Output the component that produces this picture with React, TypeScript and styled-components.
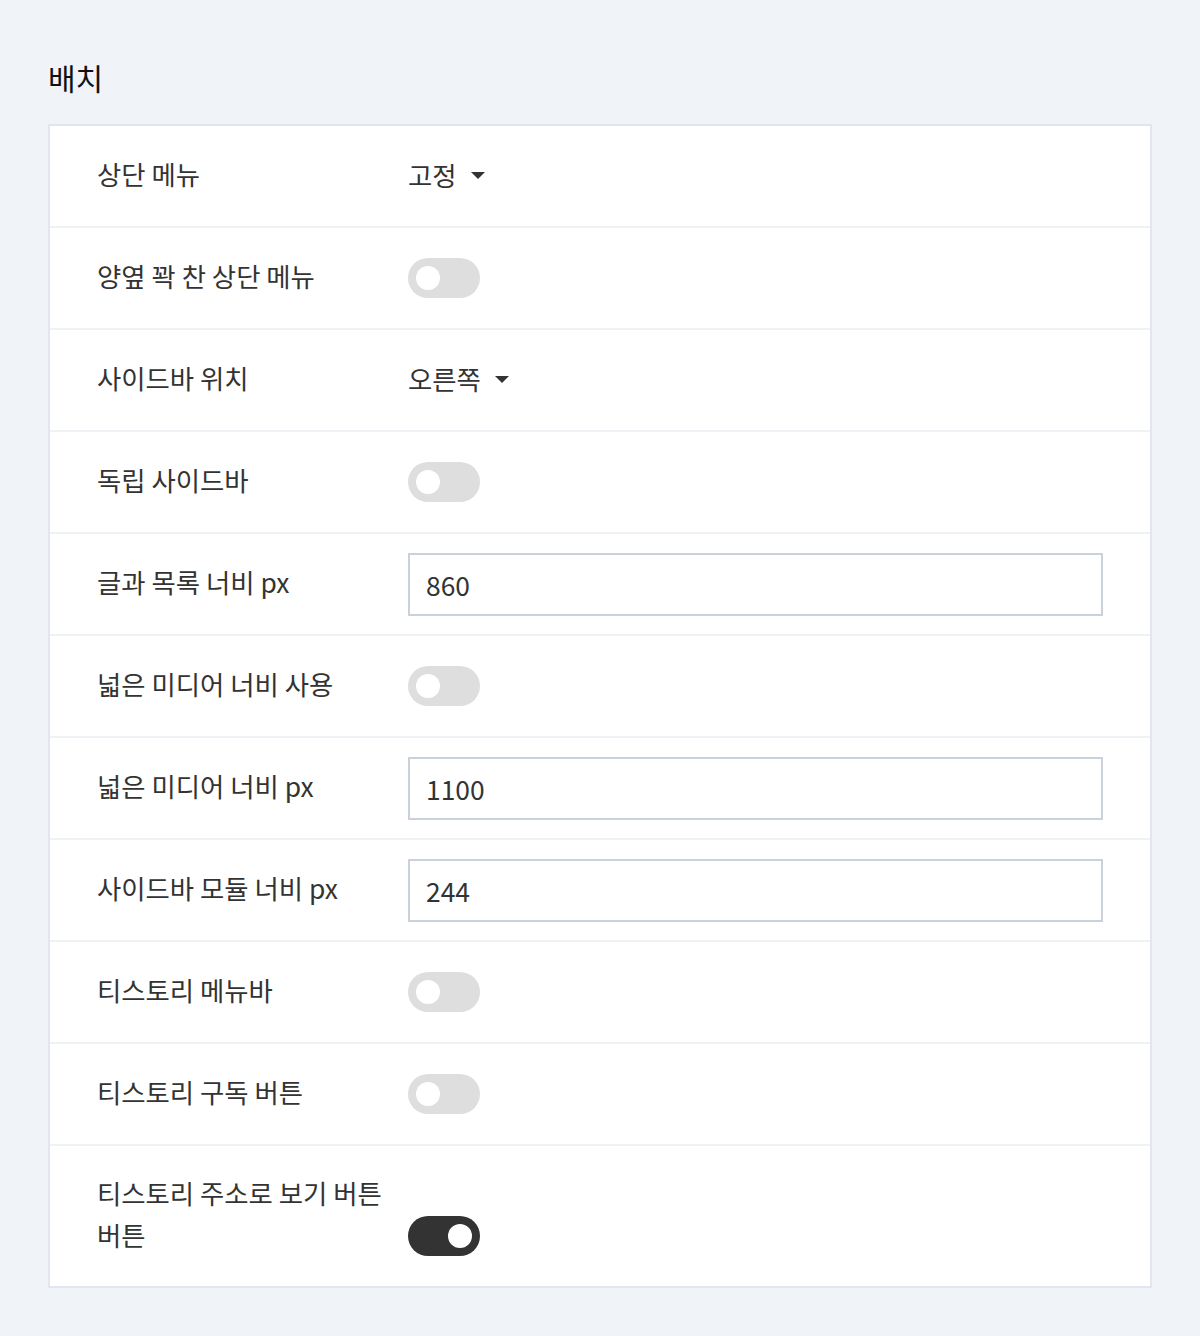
import React from "react";
import styled, { createGlobalStyle } from "styled-components";

const GlobalStyle = createGlobalStyle`
  html, body { margin: 0; padding: 0; background: #f0f3f7; }
  body { font-family: "Noto Sans CJK KR", "Noto Sans", sans-serif; color: #333; }
  * { box-sizing: border-box; }
`;

const Page = styled.div`
  padding: 55px 48px 49px;
  background: #f0f3f7;
`;

const Title = styled.h2`
  margin: 0 0 24px;
  font-size: 30px;
  font-weight: 400;
  line-height: 45px;
  color: #111;
`;

const Card = styled.div`
  background: #fff;
  border: 2px solid #e2e6ee;
`;

const Row = styled.div<{ $end?: boolean }>`
  display: flex;
  align-items: ${(p) => (p.$end ? "flex-end" : "center")};
  min-height: 102px;
  padding: 0 47px;
  border-bottom: 2px solid #eef1f5;
  &:last-child { border-bottom: none; min-height: 100px; }
`;

const Label = styled.div`
  flex: 0 0 311px;
  padding: 26px 0 30px;
  font-size: 26.4px;
  line-height: 42px;
  color: #333;
  word-break: keep-all;
`;

const Value = styled.div<{ $end?: boolean }>`
  flex: 1;
  display: flex;
  align-items: center;
  padding-bottom: ${(p) => (p.$end ? "30px" : "0")};
`;

const Select = styled.div`
  display: inline-flex;
  align-items: center;
  gap: 14px;
  font-size: 26.4px;
  line-height: 42px;
  color: #333;
  cursor: pointer;
  margin-top: -3px;
`;

const Caret = styled.span`
  width: 0;
  height: 0;
  border-left: 7px solid transparent;
  border-right: 7px solid transparent;
  border-top: 7px solid #333;
  margin-top: 2px;
`;

const Toggle = styled.div<{ $on?: boolean }>`
  position: relative;
  width: 72px;
  height: 40px;
  border-radius: 20px;
  background: ${(p) => (p.$on ? "#333333" : "#dedede")};
  &::after {
    content: "";
    position: absolute;
    top: 8px;
    left: ${(p) => (p.$on ? "40px" : "8px")};
    width: 24px;
    height: 24px;
    border-radius: 50%;
    background: #fff;
  }
`;

const Input = styled.input`
  width: 695px;
  height: 63px;
  border: 2px solid #c9d1db;
  padding: 0 16px;
  font-family: "Noto Sans CJK KR", "Noto Sans", sans-serif;
  font-size: 26.4px;
  color: #333;
  background: #fff;
  outline: none;
`;

type Item =
  | { label: string; kind: "select"; value: string }
  | { label: string; kind: "toggle"; on?: boolean; end?: boolean }
  | { label: string; kind: "input"; value: string };

const items: Item[] = [
  { label: "상단 메뉴", kind: "select", value: "고정" },
  { label: "양옆 꽉 찬 상단 메뉴", kind: "toggle" },
  { label: "사이드바 위치", kind: "select", value: "오른쪽" },
  { label: "독립 사이드바", kind: "toggle" },
  { label: "글과 목록 너비 px", kind: "input", value: "860" },
  { label: "넓은 미디어 너비 사용", kind: "toggle" },
  { label: "넓은 미디어 너비 px", kind: "input", value: "1100" },
  { label: "사이드바 모듈 너비 px", kind: "input", value: "244" },
  { label: "티스토리 메뉴바", kind: "toggle" },
  { label: "티스토리 구독 버튼", kind: "toggle" },
  { label: "티스토리 주소로 보기 버튼 버튼", kind: "toggle", on: true, end: true },
];

export default function App() {
  return (
    <>
      <GlobalStyle />
      <Page>
        <Title>배치</Title>
        <Card>
          {items.map((it) => {
            const end = it.kind === "toggle" && !!it.end;
            return (
              <Row key={it.label} $end={end}>
                <Label>{it.label}</Label>
                <Value $end={end}>
                  {it.kind === "select" && (
                    <Select>
                      {it.value}
                      <Caret />
                    </Select>
                  )}
                  {it.kind === "toggle" && <Toggle $on={it.on} />}
                  {it.kind === "input" && <Input defaultValue={it.value} />}
                </Value>
              </Row>
            );
          })}
        </Card>
      </Page>
    </>
  );
}
